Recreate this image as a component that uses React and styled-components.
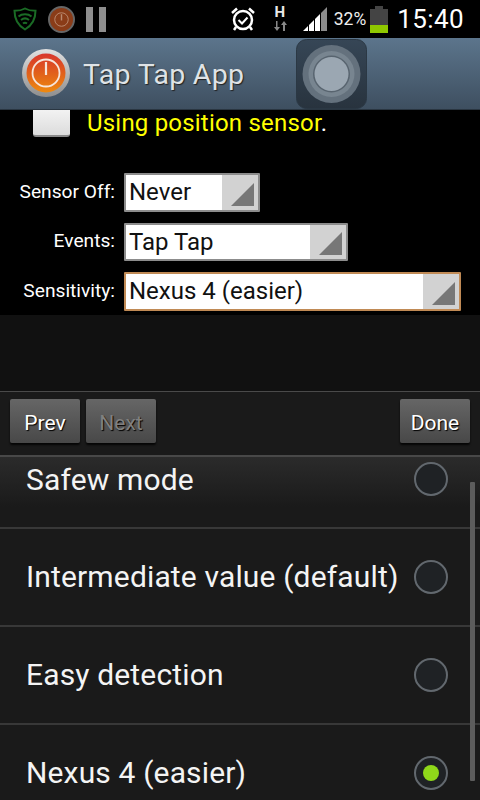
import React from "react";
import styled, { createGlobalStyle } from "styled-components";

const GlobalStyle = createGlobalStyle`
  html, body { margin: 0; padding: 0; background: #000; }
  body { font-family: Roboto, "Noto Sans", sans-serif; }
`;

const Screen = styled.div`
  position: relative;
  width: 480px;
  height: 800px;
  overflow: hidden;
  background: #000;
  display: flex;
  flex-direction: column;
`;

const StatusBar = styled.div`
  height: 38px;
  flex: none;
  display: flex;
  align-items: center;
  padding: 0 16px 0 13px;
  box-sizing: border-box;
  background: #000;
`;

const StatusLeft = styled.div`
  display: flex;
  align-items: center;
  gap: 11px;
  flex: 1;
`;

const StatusRight = styled.div`
  display: flex;
  align-items: center;
`;

const Percent = styled.span`
  color: #eee;
  font-size: 17.5px;
  margin: 0 4px 0 6px;
`;

const Clock = styled.span`
  color: #fff;
  font-size: 26px;
  margin-left: 9px;
  letter-spacing: 0.4px;
`;

const AlarmSlot = styled.span`
  display: flex;
  margin-right: 17px;
`;

const DataSlot = styled.span`
  position: relative;
  display: flex;
  width: 14px;
  height: 26px;
  margin-right: 16px;
`;

const NetworkLetter = styled.span`
  position: absolute;
  left: 0;
  top: -2px;
  width: 14px;
  text-align: center;
  font-size: 15px;
  line-height: 17px;
  font-weight: 700;
  color: #e8e8e8;
`;

const ActionBar = styled.div`
  height: 72px;
  flex: none;
  box-sizing: border-box;
  display: flex;
  align-items: center;
  padding: 0 0 1px 22px;
  gap: 13px;
  background: linear-gradient(#5c758c, #3e4f60);
  border-bottom: 1px solid #2a3641;
`;

const AppTitle = styled.h1`
  margin: 0;
  padding-top: 3px;
  font-size: 28.5px;
  font-weight: 400;
  color: #dfe3e6;
  text-shadow: 1px 1px 1px #222;
  letter-spacing: 0.3px;
`;

const FloatingKnob = styled.div`
  position: absolute;
  left: 296px;
  top: 39px;
  width: 71px;
  height: 70px;
`;

const Form = styled.div`
  height: 205px;
  flex: none;
  background: #000;
  overflow: hidden;
  box-sizing: border-box;
`;

const CheckRow = styled.div`
  height: 28px;
  display: flex;
  padding-left: 33px;
  gap: 17px;
  overflow: hidden;
`;

const CheckBox = styled.div`
  width: 37px;
  height: 27px;
  box-sizing: border-box;
  flex: none;
  background: linear-gradient(#f2f2f2, #dcdcdc);
  border-bottom: 2px solid #8a8a8a;
  border-radius: 0 0 3px 3px;
`;

const CheckLabel = styled.span`
  color: #ffff00;
  font-size: 24px;
  letter-spacing: 0.2px;
  line-height: 27px;
  & > i {
    color: #fff;
    font-style: normal;
  }
`;

const Fields = styled.div`
  margin-top: 35px;
  display: flex;
  flex-direction: column;
  gap: 11px;
`;

const Field = styled.div`
  display: flex;
  align-items: center;
  height: 38.5px;
`;

const FieldLabel = styled.label`
  width: 115px;
  flex: none;
  box-sizing: border-box;
  padding-bottom: 2px;
  text-align: right;
  color: #fff;
  font-size: 19.2px;
  margin-right: 9px;
`;

const Select = styled.div`
  width: ${(p) => p.$width}px;
  height: 38.5px;
  box-sizing: border-box;
  display: flex;
  background: #fff;
  border: 2px solid ${(p) => (p.$focused ? "#c08a55" : "#8c8c8c")};
  border-radius: 1px;
`;

const SelectValue = styled.div`
  flex: 1;
  font-size: 24px;
  line-height: 35px;
  color: #111;
  padding-left: 3px;
`;

const SelectArrow = styled.div`
  width: 36px;
  background: #d2d2d2;
  display: flex;
  align-items: flex-end;
  justify-content: flex-end;
  padding: 0 4px 4px 0;
  box-sizing: border-box;
`;

const Spacer = styled.div`
  height: 76px;
  flex: none;
  background: #111;
`;

const Toolbar = styled.div`
  height: 66px;
  flex: none;
  box-sizing: border-box;
  display: flex;
  align-items: flex-start;
  gap: 6px;
  padding: 7px 10px 0;
  background: #1a1a1a;
  border-top: 1px solid #4a4a4a;
  border-bottom: 2px solid #484848;
`;

const ToolButton = styled.button`
  width: 70px;
  height: 44px;
  padding: 3px 0 0;
  border: none;
  border-radius: 2px;
  background: linear-gradient(#666, #484848);
  box-shadow: 0 2px 2px rgba(0, 0, 0, 0.8);
  color: ${(p) => (p.disabled ? "#808080" : "#fff")};
  font-family: Roboto, sans-serif;
  font-size: 21px;
  text-shadow: 1px 1px 1px #000;
  &:last-child {
    margin-left: auto;
  }
`;

const List = styled.div`
  flex: 1;
  position: relative;
  overflow: hidden;
  background: linear-gradient(#2b2b2b, #1a1a1a 50px);
`;

const Row = styled.div`
  height: ${(p) => p.$height}px;
  box-sizing: border-box;
  display: flex;
  align-items: ${(p) => (p.$top ? "flex-start" : "center")};
  justify-content: space-between;
  padding: ${(p) => (p.$top ? "5px" : "0")} 32px 0 26px;
  border-bottom: 2px solid #383838;
  background: ${(p) => (p.$top ? "transparent" : "#1a1a1a")};
  &:last-of-type {
    border-bottom: none;
  }
`;

const RowText = styled.span`
  color: #f4f4f4;
  font-size: 30px;
  letter-spacing: 0.15px;
  line-height: 36px;
`;

const Radio = styled.div`
  width: 34px;
  height: 34px;
  flex: none;
  box-sizing: border-box;
  border-radius: 50%;
  border: 2px solid #62686e;
  background: #1f2225;
  display: flex;
  align-items: center;
  justify-content: center;
  &::after {
    content: "";
    display: ${(p) => (p.$checked ? "block" : "none")};
    width: 16px;
    height: 16px;
    border-radius: 50%;
    background: #8fd81a;
  }
`;

const ScrollThumb = styled.div`
  position: absolute;
  right: 5px;
  top: 25px;
  width: 5px;
  height: 299px;
  background: #5c5c5c;
  border-radius: 1px;
`;

const ShieldIcon = () => (
  <svg width="24" height="24" viewBox="0 0 24 24" fill="none">
    <path d="M12 1.5C8.5 3.5 5 3.8 1.5 3.8 1.5 12 4 18 12 22.5 20 18 22.5 12 22.5 3.8 19 3.8 15.500 3.500 12 1.500Z" stroke="#1a6b25" strokeWidth="2" />
    <path d="M5.500 9.500C9 6.500 15 6.500 18.500 9.500M8 13C10.500 11 13.500 11 16 13M10 16.500C11.200 15.500 12.800 15.500 14 16.500" stroke="#1a6b25" strokeWidth="2" />
  </svg>
);

const PowerSmall = () => (
  <svg width="27" height="27" viewBox="0 0 28 28">
    <circle cx="14" cy="14" r="13" fill="#8a3c18" stroke="#666" strokeWidth="2" />
    <circle cx="14" cy="14" r="7" fill="none" stroke="#b98a70" strokeWidth="1" />
    <path d="M14 8.500V15" stroke="#b98a70" strokeWidth="1.500" />
  </svg>
);

const PauseIcon = () => (
  <svg width="20" height="25" viewBox="0 0 20 25">
    <rect x="0" width="7" height="25" fill="#8e8e8e" />
    <rect x="13" width="7" height="25" fill="#8e8e8e" />
  </svg>
);

const AlarmIcon = () => (
  <svg width="26" height="26" viewBox="0 0 26 26" fill="none" stroke="#fff">
    <circle cx="13" cy="14" r="9" strokeWidth="2.500" />
    <path d="M8.500 14l3.500 3.500 5.500-6" strokeWidth="2" />
    <path d="M2 7l5-4.500M24 7l-5-4.500M6 21l-2 3M20 21l2 3" strokeWidth="2.500" />
  </svg>
);

const DataArrows = () => (
  <svg width="14" height="26" viewBox="0 0 14 26">
    <path d="M3.500 25v-6H1l3-4 3 4H5v6z" fill="#888" transform="rotate(180 4 20)" />
    <path d="M10 25v-6H8l3-4 3 4h-2v6z" fill="#888" />
  </svg>
);

const SignalIcon = () => (
  <svg width="25" height="24" viewBox="0 0 25 24">
    <path d="M0 24L5 19V24z" fill="#fff" />
    <path d="M6 18L11 13V24H6z" fill="#fff" />
    <path d="M12 12L17 7V24H12z" fill="#fff" />
    <path d="M18 6L24 0V24H18z" fill="#8c8c8c" />
  </svg>
);

const BatteryIcon = () => (
  <svg width="18" height="27" viewBox="0 0 18 27">
    <rect x="5" width="8" height="3" fill="#444" />
    <rect y="3" width="18" height="16" fill="#444" />
    <rect y="19" width="18" height="8" fill="#8fc800" />
  </svg>
);

const PowerLogo = () => (
  <svg width="48" height="48" viewBox="0 0 48 48">
    <defs>
      <linearGradient id="ring" x1="0" y1="0" x2="0" y2="1">
        <stop offset="0" stopColor="#e0e0e0" />
        <stop offset="1" stopColor="#8e8e8e" />
      </linearGradient>
      <linearGradient id="face" x1="0" y1="0" x2="0" y2="1">
        <stop offset="0" stopColor="#d8352c" />
        <stop offset="0.55" stopColor="#e2641a" />
        <stop offset="1" stopColor="#ee8a10" />
      </linearGradient>
    </defs>
    <circle cx="24" cy="24" r="24" fill="url(#ring)" />
    <circle cx="24" cy="24" r="19.500" fill="url(#face)" />
    <circle cx="24" cy="24" r="13.500" fill="none" stroke="#f6e6dc" strokeWidth="1.800" />
    <path d="M24 13V26" stroke="#f6e6dc" strokeWidth="2.200" />
  </svg>
);

const KnobIcon = () => (
  <svg width="71" height="70" viewBox="0 0 71 70">
    <defs>
      <linearGradient id="tile" x1="0" y1="0" x2="0" y2="1">
        <stop offset="0" stopColor="#364656" />
        <stop offset="1" stopColor="#28333e" />
      </linearGradient>
    </defs>
    <rect x="0.500" y="0.500" width="70" height="69" rx="10" fill="url(#tile)" stroke="#2b3844" />
    <circle cx="35.500" cy="35" r="29" fill="#64717d" />
    <circle cx="35.500" cy="35" r="23" fill="#788590" />
    <circle cx="35.500" cy="35" r="18.500" fill="#58646f" />
    <circle cx="35.500" cy="35" r="17" fill="#9ba7b2" />
  </svg>
);

const ArrowIcon = () => (
  <svg width="23" height="23" viewBox="0 0 23 23">
    <path d="M23 0V23H0z" fill="#777" />
  </svg>
);

const fields = [
  { label: "Sensor Off:", value: "Never", width: 136 },
  { label: "Events:", value: "Tap Tap", width: 224 },
  { label: "Sensitivity:", value: "Nexus 4 (easier)", width: 337, focused: true },
];

const options = [
  { label: "Safew mode", height: 72, top: true },
  { label: "Intermediate value (default)", height: 98 },
  { label: "Easy detection", height: 98 },
  { label: "Nexus 4 (easier)", height: 98, checked: true },
];

export default function App() {
  return (
    <Screen>
      <GlobalStyle />
      <StatusBar>
        <StatusLeft>
          <ShieldIcon />
          <PowerSmall />
          <PauseIcon />
        </StatusLeft>
        <StatusRight>
          <AlarmSlot>
            <AlarmIcon />
          </AlarmSlot>
          <DataSlot>
            <NetworkLetter>H</NetworkLetter>
            <DataArrows />
          </DataSlot>
          <SignalIcon />
          <Percent>32%</Percent>
          <BatteryIcon />
          <Clock>15:40</Clock>
        </StatusRight>
      </StatusBar>
      <ActionBar>
        <PowerLogo />
        <AppTitle>Tap Tap App</AppTitle>
      </ActionBar>
      <FloatingKnob>
        <KnobIcon />
      </FloatingKnob>
      <Form>
        <CheckRow>
          <CheckBox />
          <CheckLabel>
            Using position sensor<i>.</i>
          </CheckLabel>
        </CheckRow>
        <Fields>
          {fields.map((f) => (
            <Field key={f.label}>
              <FieldLabel>{f.label}</FieldLabel>
              <Select $width={f.width} $focused={f.focused}>
                <SelectValue>{f.value}</SelectValue>
                <SelectArrow>
                  <ArrowIcon />
                </SelectArrow>
              </Select>
            </Field>
          ))}
        </Fields>
      </Form>
      <Spacer />
      <Toolbar>
        <ToolButton>Prev</ToolButton>
        <ToolButton disabled>Next</ToolButton>
        <ToolButton>Done</ToolButton>
      </Toolbar>
      <List>
        {options.map((o) => (
          <Row key={o.label} $height={o.height} $top={o.top}>
            <RowText>{o.label}</RowText>
            <Radio $checked={o.checked} />
          </Row>
        ))}
        <ScrollThumb />
      </List>
    </Screen>
  );
}
